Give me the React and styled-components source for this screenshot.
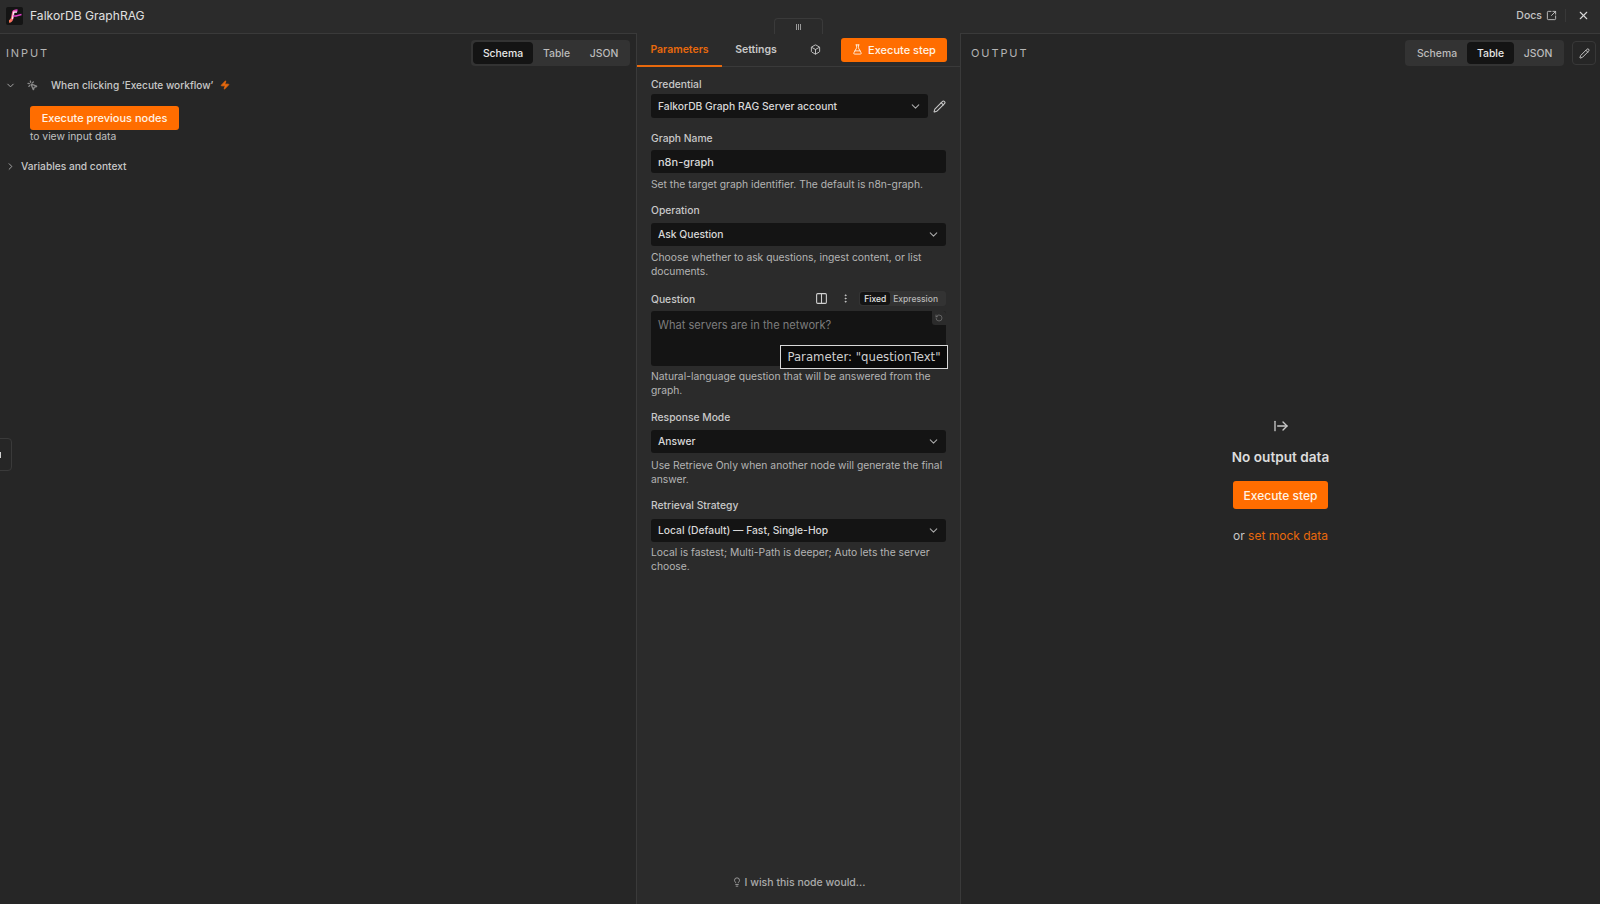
import React from 'react';
import styled, { createGlobalStyle } from 'styled-components';
import {
  ChevronDown, ChevronRight, MousePointerClick, Zap, FlaskConical, Box, Pencil,
  Columns2, EllipsisVertical, SquareArrowOutUpRight, X, ArrowRightFromLine, Lightbulb, RotateCcw,
} from 'lucide-react';

const GlobalStyle = createGlobalStyle`
  html, body { margin: 0; padding: 0; height: 100%; background: #262626; }
  * { box-sizing: border-box; }
  body { font-family: Inter, "Liberation Sans", sans-serif; color: #d4d4d4; overflow: hidden; }
`;

const Page = styled.div`
  position: relative;
  display: flex;
  flex-direction: column;
  width: 1600px;
  height: 904px;
  overflow: hidden;
`;

const Header = styled.header`
  display: flex;
  align-items: center;
  height: 34px;
  padding: 0 10px 2px 6px;
  background: #2b2b2b;
  border-bottom: 1px solid #3a3a3a;
`;

const Logo = styled.svg`
  width: 17px;
  height: 18px;
`;

const Title = styled.div`
  margin-left: 7px;
  font-size: 12.1px;
  color: #e0e0e0;
`;

const HeaderRight = styled.div`
  margin-left: auto;
  display: flex;
  align-items: center;
  font-size: 10.5px;
  font-weight: 500;
  color: #c4c4c4;
`;

const DocsLink = styled.span`
  display: flex;
  align-items: center;
  gap: 4px;
  padding-right: 8px;
  border-right: 1px solid #383838;
`;

const CloseButton = styled.span`
  display: flex;
  margin-left: 11px;
  color: #d8d8d8;
`;

const Body = styled.div`
  flex: 1;
  display: flex;
  min-height: 0;
`;

const SidePanel = styled.section`
  display: flex;
  flex-direction: column;
  background: #262626;
  width: ${(p) => p.$width};
  flex: ${(p) => (p.$width ? 'none' : 1)};
`;

const PanelHead = styled.div`
  display: flex;
  align-items: center;
  justify-content: space-between;
  height: 38px;
  padding: ${(p) => p.$padding};
`;

const PanelTitle = styled.div`
  font-size: 11px;
  font-weight: 400;
  letter-spacing: 1.9px;
  color: #b4b4b4;
`;

const HeadRight = styled.div`
  display: flex;
  align-items: center;
  gap: 8px;
`;

const Switcher = styled.div`
  display: flex;
  padding: 2px;
  border-radius: 4px;
  background: #333333;
`;

const SwitchItem = styled.div`
  display: flex;
  align-items: center;
  justify-content: center;
  height: 22px;
  width: ${(p) => p.$width}px;
  border-radius: 4px;
  font-size: 10.4px;
  font-weight: 500;
  color: ${(p) => (p.$active ? '#e8e8e8' : '#bcbcbc')};
  background: ${(p) => (p.$active ? '#141414' : 'transparent')};
`;

const SquareButton = styled.div`
  display: flex;
  align-items: center;
  justify-content: center;
  width: 24px;
  height: 24px;
  border: 1px solid #383838;
  border-radius: 4px;
  color: #d0d0d0;
`;

const TriggerRow = styled.div`
  display: flex;
  align-items: center;
  height: 20px;
  margin-top: 3px;
  padding-left: 5px;
  font-size: 10.1px;
  font-weight: 500;
  color: #c8c8c8;
`;

const TriggerName = styled.span`
  margin-left: 13px;
`;

const TriggerBolt = styled.span`
  display: flex;
  margin-left: 7px;
  color: #e8690d;
`;

const TriggerIcon = styled.span`
  display: flex;
  margin-left: 11px;
  color: #8a8a8a;
`;

const TriggerBody = styled.div`
  display: flex;
  flex-direction: column;
  align-items: flex-start;
  padding: 11px 0 0 30px;
`;

const OrangeButton = styled.div`
  display: flex;
  align-items: center;
  justify-content: center;
  gap: 5px;
  width: ${(p) => p.$width}px;
  height: ${(p) => p.$height}px;
  border-radius: 3px;
  background: #ff6d00;
  color: #fff3e6;
  font-size: ${(p) => p.$size || 11}px;
  font-weight: 500;
`;

const ViewHint = styled.div`
  font-size: 10.3px;
  line-height: 13px;
  color: #c0c0c0;
`;

const VariablesRow = styled(TriggerRow)`
  margin-top: 13px;
  font-size: 10.2px;
`;

const VariablesName = styled.span`
  margin-left: 5px;
`;

const MainPanel = styled.section`
  position: relative;
  display: flex;
  flex-direction: column;
  width: 325px;
  margin-top: -1px;
  background: #2b2b2b;
  border-left: 1px solid #3a3a3a;
  border-right: 1px solid #3a3a3a;
`;

const TabBar = styled.div`
  display: flex;
  align-items: center;
  height: 34px;
  padding-right: 13px;
  border-bottom: 1px solid #3a3a3a;
`;

const Tab = styled.div`
  display: flex;
  align-items: center;
  justify-content: center;
  align-self: stretch;
  width: ${(p) => p.$width}px;
  font-size: 10.5px;
  font-weight: 600;
  color: ${(p) => (p.$active ? '#e8690d' : '#c8c8c8')};
  border-bottom: 2px solid ${(p) => (p.$active ? '#e8690d' : 'transparent')};
  margin-bottom: -1px;
`;

const TabIcon = styled.span`
  display: flex;
  margin: 0 auto 0 20px;
  color: #c8c8c8;
`;

const Form = styled.div`
  display: flex;
  flex-direction: column;
  padding: 9px 14px 0;
  flex: 1;
`;

const Field = styled.div`
  display: flex;
  flex-direction: column;
  margin-bottom: ${(p) => p.$gap}px;
`;

const Label = styled.div`
  height: 16px;
  font-size: 10.3px;
  font-weight: 500;
  line-height: 16px;
  color: #c8c8c8;
  margin-bottom: ${(p) => p.$below ?? 4}px;
`;

const LabelRow = styled.div`
  display: flex;
  align-items: center;
  justify-content: space-between;
  height: 16px;
  font-size: 10.3px;
  font-weight: 500;
  color: #c8c8c8;
  margin-bottom: 4px;
`;

const SelectRow = styled.div`
  display: flex;
  align-items: center;
  gap: 5px;
  color: #c8c8c8;
`;

const Control = styled.div`
  flex: 1 0 auto;
  display: flex;
  align-items: center;
  justify-content: space-between;
  height: ${(p) => p.$height || 23}px;
  padding: 0 6px 0 7px;
  border-radius: 3px;
  background: #141414;
  color: #d8d8d8;
  font-size: ${(p) => p.$size || 10.3}px;
  font-weight: ${(p) => p.$weight || 500};
`;

const Help = styled.div`
  margin-top: ${(p) => p.$top ?? 4}px;
  font-size: 10.3px;
  line-height: 14.5px;
  color: #b4b4b4;
`;

const QuestionTools = styled.div`
  display: flex;
  align-items: center;
  color: #d0d0d0;
`;

const ToolIcon = styled.span`
  display: flex;
  margin-right: ${(p) => p.$right}px;
`;

const ModeSwitch = styled.div`
  display: flex;
  align-items: center;
  height: 15px;
  padding: 1px 1px;
  border-radius: 3px;
  background: #333333;
  font-size: 8.5px;
`;

const ModeItem = styled.span`
  display: flex;
  align-items: center;
  height: 13px;
  padding: 0 ${(p) => (p.$active ? 4 : 7)}px 0 ${(p) => (p.$active ? 4 : 3)}px;
  border-radius: 3px;
  color: ${(p) => (p.$active ? '#e8e8e8' : '#b8b8b8')};
  background: ${(p) => (p.$active ? '#141414' : 'transparent')};
`;

const TextAreaBox = styled.div`
  position: relative;
  height: 55px;
  padding: 7px 7px;
  border-radius: 3px;
  background: #141414;
  font-size: 11.1px;
  color: #7c7c7c;
`;

const ResetCorner = styled.span`
  position: absolute;
  top: 0;
  right: 0;
  display: flex;
  align-items: center;
  justify-content: center;
  width: 14px;
  height: 14px;
  background: #2b2b2b;
  border-radius: 0 3px 0 3px;
  color: #7c7c7c;
`;

const ParamTip = styled.div`
  position: absolute;
  top: 34px;
  right: -2px;
  display: flex;
  align-items: center;
  justify-content: center;
  width: 168px;
  height: 24px;
  border: 1px solid #d8d8d8;
  background: #0a0a0a;
  color: #cfcfcf;
  font-family: "DejaVu Sans", sans-serif;
  font-size: 11.7px;
`;

const WishLine = styled.div`
  display: flex;
  align-items: center;
  justify-content: center;
  gap: 3px;
  height: 20px;
  margin-bottom: 12px;
  font-size: 10.5px;
  font-weight: 500;
  color: #aaaaaa;
`;

const EmptyState = styled.div`
  flex: 1;
  display: flex;
  flex-direction: column;
  align-items: center;
  padding-top: 346px;
`;

const EmptyIcon = styled.span`
  display: flex;
  color: #c8c8c8;
`;

const EmptyTitle = styled.div`
  margin-top: 14px;
  font-size: 13.6px;
  font-weight: 600;
  line-height: 18px;
  color: #dcdcdc;
`;

const EmptyLine = styled.div`
  margin-top: 19px;
  font-size: 12px;
  font-weight: 400;
  color: #c8c8c8;
`;

const MockLink = styled.span`
  color: #e8690d;
`;

const EmptyAction = styled.div`
  margin-top: 15px;
`;

const DragHandle = styled.div`
  position: absolute;
  left: 774px;
  top: 18px;
  display: flex;
  align-items: center;
  justify-content: center;
  gap: 1px;
  width: 49px;
  height: 16px;
  background: #2b2b2b;
  border: 1px solid #3a3a3a;
  border-bottom: none;
  border-radius: 4px 4px 0 0;
`;

const HandleBar = styled.i`
  width: 1px;
  height: 6px;
  background: #9a9a9a;
`;

const SideTab = styled.div`
  position: absolute;
  left: -12px;
  top: 438px;
  display: flex;
  align-items: center;
  justify-content: flex-end;
  width: 24px;
  height: 33px;
  padding-right: 10px;
  background: #262626;
  border: 1px solid #3a3a3a;
  border-radius: 4px;
`;

const SideDot = styled.i`
  width: 2px;
  height: 6px;
  background: #d0d0d0;
`;

function ViewSwitch({ active }) {
  return (
    <Switcher>
      <SwitchItem $width={60} $active={active === 'Schema'}>Schema</SwitchItem>
      <SwitchItem $width={47} $active={active === 'Table'}>Table</SwitchItem>
      <SwitchItem $width={48} $active={active === 'JSON'}>JSON</SwitchItem>
    </Switcher>
  );
}

function FalkorLogo() {
  return (
    <Logo viewBox="0 0 17 18">
      <defs>
        <linearGradient id="fk" x1="0" y1="1" x2="1" y2="0">
          <stop offset="0" stopColor="#ff7a50" />
          <stop offset="1" stopColor="#e040c8" />
        </linearGradient>
      </defs>
      <rect width="17" height="18" rx="2" fill="#141414" />
      <path d="M3 14.5 C5.5 14.5 6 12.5 6.4 10.5 L7.4 5 C7.6 4 8.5 3.5 11.5 3.5" fill="none" stroke="url(#fk)" strokeWidth="2.6" />
      <path d="M6.4 12 L7.6 5.2 H11" fill="none" stroke="#f7eef4" strokeWidth="1.2" />
      <path d="M7 9 H10 L15.5 7.5" fill="none" stroke="#e040c8" strokeWidth="1.4" />
    </Logo>
  );
}

export default function App() {
  return (
    <Page>
      <GlobalStyle />
      <Header>
        <FalkorLogo />
        <Title>FalkorDB GraphRAG</Title>
        <HeaderRight>
          <DocsLink>
            Docs
            <SquareArrowOutUpRight size={11} />
          </DocsLink>
          <CloseButton><X size={13} /></CloseButton>
        </HeaderRight>
      </Header>
      <Body>
        <SidePanel $width="636px">
          <PanelHead $padding="0 6px 0 6px">
            <PanelTitle>INPUT</PanelTitle>
            <ViewSwitch active="Schema" />
          </PanelHead>
          <TriggerRow>
            <ChevronDown size={11} color="#b0b0b0" />
            <TriggerIcon><MousePointerClick size={11} strokeWidth={2.8} /></TriggerIcon>
            <TriggerName>When clicking ‘Execute workflow’</TriggerName>
            <TriggerBolt><Zap size={10} fill="#e8690d" /></TriggerBolt>
          </TriggerRow>
          <TriggerBody>
            <OrangeButton $width={149} $height={24}>Execute previous nodes</OrangeButton>
            <ViewHint>to view input data</ViewHint>
          </TriggerBody>
          <VariablesRow>
            <ChevronRight size={11} color="#b0b0b0" />
            <VariablesName>Variables and context</VariablesName>
          </VariablesRow>
        </SidePanel>

        <MainPanel>
          <TabBar>
            <Tab $width={85} $active>Parameters</Tab>
            <Tab $width={68}>Settings</Tab>
            <TabIcon><Box size={11} /></TabIcon>
            <OrangeButton $width={106} $height={24}>
              <FlaskConical size={11} />
              Execute step
            </OrangeButton>
          </TabBar>
          <Form>
            <Field $gap={12}>
              <Label $below={2}>Credential</Label>
              <SelectRow>
                <Control $height={24}>
                  FalkorDB Graph RAG Server account
                  <ChevronDown size={13} color="#a8a8a8" />
                </Control>
                <Pencil size={13} />
              </SelectRow>
            </Field>
            <Field $gap={10}>
              <Label>Graph Name</Label>
              <Control $size={11}>n8n-graph</Control>
              <Help>Set the target graph identifier. The default is n8n-graph.</Help>
            </Field>
            <Field $gap={12}>
              <Label $below={5}>Operation</Label>
              <Control>
                Ask Question
                <ChevronDown size={13} color="#a8a8a8" />
              </Control>
              <Help>Choose whether to ask questions, ingest content, or list documents.</Help>
            </Field>
            <Field $gap={11}>
              <LabelRow>
                Question
                <QuestionTools>
                  <ToolIcon $right={12}><Columns2 size={13} /></ToolIcon>
                  <ToolIcon $right={8}><EllipsisVertical size={11} /></ToolIcon>
                  <ModeSwitch>
                    <ModeItem $active>Fixed</ModeItem>
                    <ModeItem>Expression</ModeItem>
                  </ModeSwitch>
                </QuestionTools>
              </LabelRow>
              <TextAreaBox>
                What servers are in the network?
                <ResetCorner><RotateCcw size={8} /></ResetCorner>
                <ParamTip>Parameter: "questionText"</ParamTip>
              </TextAreaBox>
              <Help $top={3}>Natural-language question that will be answered from the graph.</Help>
            </Field>
            <Field $gap={10}>
              <Label $below={5}>Response Mode</Label>
              <Control>
                Answer
                <ChevronDown size={13} color="#a8a8a8" />
              </Control>
              <Help $top={5}>Use Retrieve Only when another node will generate the final answer.</Help>
            </Field>
            <Field $gap={0}>
              <Label $below={6}>Retrieval Strategy</Label>
              <Control>
                Local (Default) — Fast, Single-Hop
                <ChevronDown size={13} color="#a8a8a8" />
              </Control>
              <Help $top={3}>Local is fastest; Multi-Path is deeper; Auto lets the server choose.</Help>
            </Field>
          </Form>
          <WishLine>
            <Lightbulb size={10} />
            I wish this node would...
          </WishLine>
        </MainPanel>

        <SidePanel>
          <PanelHead $padding="0 4px 0 10px">
            <PanelTitle>OUTPUT</PanelTitle>
            <HeadRight>
              <ViewSwitch active="Table" />
              <SquareButton><Pencil size={11} /></SquareButton>
            </HeadRight>
          </PanelHead>
          <EmptyState>
            <EmptyIcon><ArrowRightFromLine size={16} /></EmptyIcon>
            <EmptyTitle>No output data</EmptyTitle>
            <EmptyAction>
              <OrangeButton $width={95} $height={28} $size={12}>Execute step</OrangeButton>
            </EmptyAction>
            <EmptyLine>
              or <MockLink>set mock data</MockLink>
            </EmptyLine>
          </EmptyState>
        </SidePanel>
      </Body>
      <DragHandle>
        <HandleBar />
        <HandleBar />
        <HandleBar />
      </DragHandle>
      <SideTab><SideDot /></SideTab>
    </Page>
  );
}
